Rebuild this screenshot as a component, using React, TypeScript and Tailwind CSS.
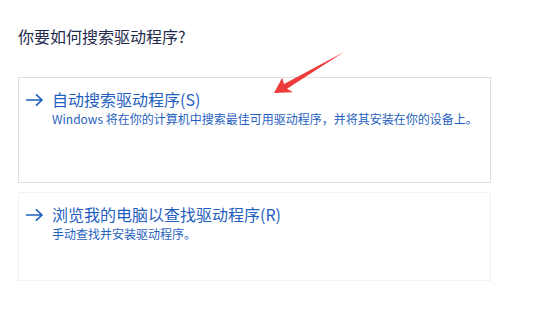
import React from "react";

const font = { fontFamily: '"Noto Sans CJK SC", "Noto Sans", sans-serif' };

function BlueArrow() {
  return (
    <svg width="17" height="12" viewBox="0 0 17 12" className="shrink-0">
      <path d="M0.5 6 H16 M10.5 0.8 L16 6 L10.5 11.2" fill="none" stroke="#1f5fbf" strokeWidth="1.7" strokeLinecap="round" strokeLinejoin="round" />
    </svg>
  );
}

function Option({ title, desc, h, border }: { title: string; desc: string; h: string; border: string }) {
  return (
    <div className={`w-[473px] border ${border} ${h} pl-[7px] pt-[10px]`}>
      <div className="flex items-center gap-[9px] h-[23px]">
        <BlueArrow />
        <span className="text-[16px] leading-[23px] text-[#1f5fbf]">{title}</span>
      </div>
      <div className="pl-[26px] text-[12px] leading-[15px] text-[#1f5fbf]">{desc}</div>
    </div>
  );
}

export default function App() {
  return (
    <div className="relative w-[560px] h-[315px] bg-white overflow-hidden" style={font}>
      <div className="pl-[18px] pt-[25px]">
        <div className="text-[16px] leading-[23px] text-[#1f2b4d]">你要如何搜索驱动程序?</div>
        <div className="mt-[29px]">
          <Option
            title="自动搜索驱动程序(S)"
            desc="Windows 将在你的计算机中搜索最佳可用驱动程序，并将其安装在你的设备上。"
            h="h-[106px]"
            border="border-[#dedede]"
          />
        </div>
        <div className="mt-[9px]">
          <Option
            title="浏览我的电脑以查找驱动程序(R)"
            desc="手动查找并安装驱动程序。"
            h="h-[89px]"
            border="border-[#f2f2f2]"
          />
        </div>
      </div>
      <svg className="absolute left-0 top-0" width="560" height="315" viewBox="0 0 560 315">
        <polygon
          points="344,52 287,88.8 293,92.2 274,93 282.2,77.8 284,84"
          fill="#ee3b3b"
        />
      </svg>
    </div>
  );
}
